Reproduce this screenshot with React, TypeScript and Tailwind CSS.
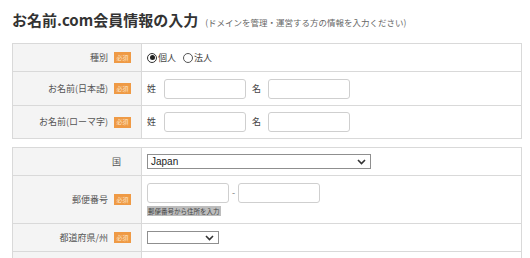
import React from 'react';

const jp = { fontFamily: '"Noto Sans CJK JP", "Noto Sans", sans-serif' };

function Badge() {
  return (
    <span className="ml-[6px] inline-flex h-[11px] w-[17px] items-center justify-center bg-[#ef9a45] text-[6px] leading-none text-[#fde6cc]">
      必須
    </span>
  );
}

function Row({
  label,
  required = true,
  h,
  first = false,
  children,
}: {
  label: string;
  required?: boolean;
  h: string;
  first?: boolean;
  children: React.ReactNode;
}) {
  return (
    <div className={`flex ${h} ${first ? '' : 'border-t border-[#d9d9d9]'}`}>
      <div className="flex w-[129px] shrink-0 items-center justify-end border-r border-[#d9d9d9] bg-[#f4f4f4] pr-[10px] text-[9px] text-[#555]">
        <span>{label}</span>
        {required ? <Badge /> : <span className="w-[10px]" />}
      </div>
      <div className="flex flex-1 items-center pl-[5px] text-[9px] text-[#444]">{children}</div>
    </div>
  );
}

function TextBox({ w }: { w: string }) {
  return <div className={`h-[20px] ${w} rounded-[3px] border border-[#cfcfcf] bg-white`} />;
}

function Chevron() {
  return (
    <svg width="9" height="6" viewBox="0 0 9 6" className="shrink-0">
      <path d="M1 1l3.5 3.5L8 1" fill="none" stroke="#333" strokeWidth="1.6" />
    </svg>
  );
}

function NameFields() {
  return (
    <>
      <span>姓</span>
      <div className="ml-[8px]">
        <TextBox w="w-[82px]" />
      </div>
      <span className="ml-[6px]">名</span>
      <div className="ml-[7px]">
        <TextBox w="w-[82px]" />
      </div>
    </>
  );
}

export default function App() {
  return (
    <div className="h-[258px] w-[530px] overflow-hidden bg-white" style={jp}>
      <div className="flex items-baseline pl-[12px] pt-[10px]">
        <h1 className="text-[15px] font-bold leading-[20px] text-[#333]">お名前.com会員情報の入力</h1>
        <span className="ml-[7px] text-[8.5px] text-[#666]">(ドメインを管理・運営する方の情報を入力ください)</span>
      </div>

      <div className="ml-[12px] mt-[13px] w-[510px] border border-[#d9d9d9]">
        <Row label="種別" h="h-[27px]" first>
          <span className="flex items-center gap-[1px]">
            <span className="flex h-[10px] w-[10px] items-center justify-center rounded-full border border-[#333]">
              <span className="h-[5px] w-[5px] rounded-full bg-[#222]" />
            </span>
            個人
          </span>
          <span className="ml-[7px] flex items-center gap-[1px]">
            <span className="h-[10px] w-[10px] rounded-full border border-[#555]" />
            法人
          </span>
        </Row>
        <Row label="お名前(日本語)" h="h-[34px]">
          <NameFields />
        </Row>
        <Row label="お名前(ローマ字)" h="h-[33px]">
          <NameFields />
        </Row>
      </div>

      <div className="ml-[12px] mt-[8px] w-[510px] border border-[#d9d9d9]">
        <Row label="国" required={false} h="h-[27px]" first>
          <div className="flex h-[15px] w-[224px] items-center justify-between border border-[#8f8f8f] bg-white pl-[3px] pr-[4px]">
            <span className="text-[10px] text-[#222]" style={{ fontFamily: '"Liberation Sans", sans-serif' }}>
              Japan
            </span>
            <Chevron />
          </div>
        </Row>
        <Row label="郵便番号" h="h-[48px]">
          <div className="flex flex-col">
            <div className="flex items-center">
              <TextBox w="w-[82px]" />
              <span className="mx-[3px] text-[#777]">-</span>
              <TextBox w="w-[82px]" />
            </div>
            <span className="mt-[3px] w-fit bg-[#bdbdbd] px-[1px] text-[6.5px] leading-[10px] text-[#444]">
              郵便番号から住所を入力
            </span>
          </div>
        </Row>
        <Row label="都道府県/州" h="h-[28px]">
          <div className="flex h-[13px] w-[72px] items-center justify-end border border-[#8f8f8f] bg-white pr-[4px]">
            <Chevron />
          </div>
        </Row>
        <Row label="" required={false} h="h-[28px]">
          <span />
        </Row>
      </div>
    </div>
  );
}
